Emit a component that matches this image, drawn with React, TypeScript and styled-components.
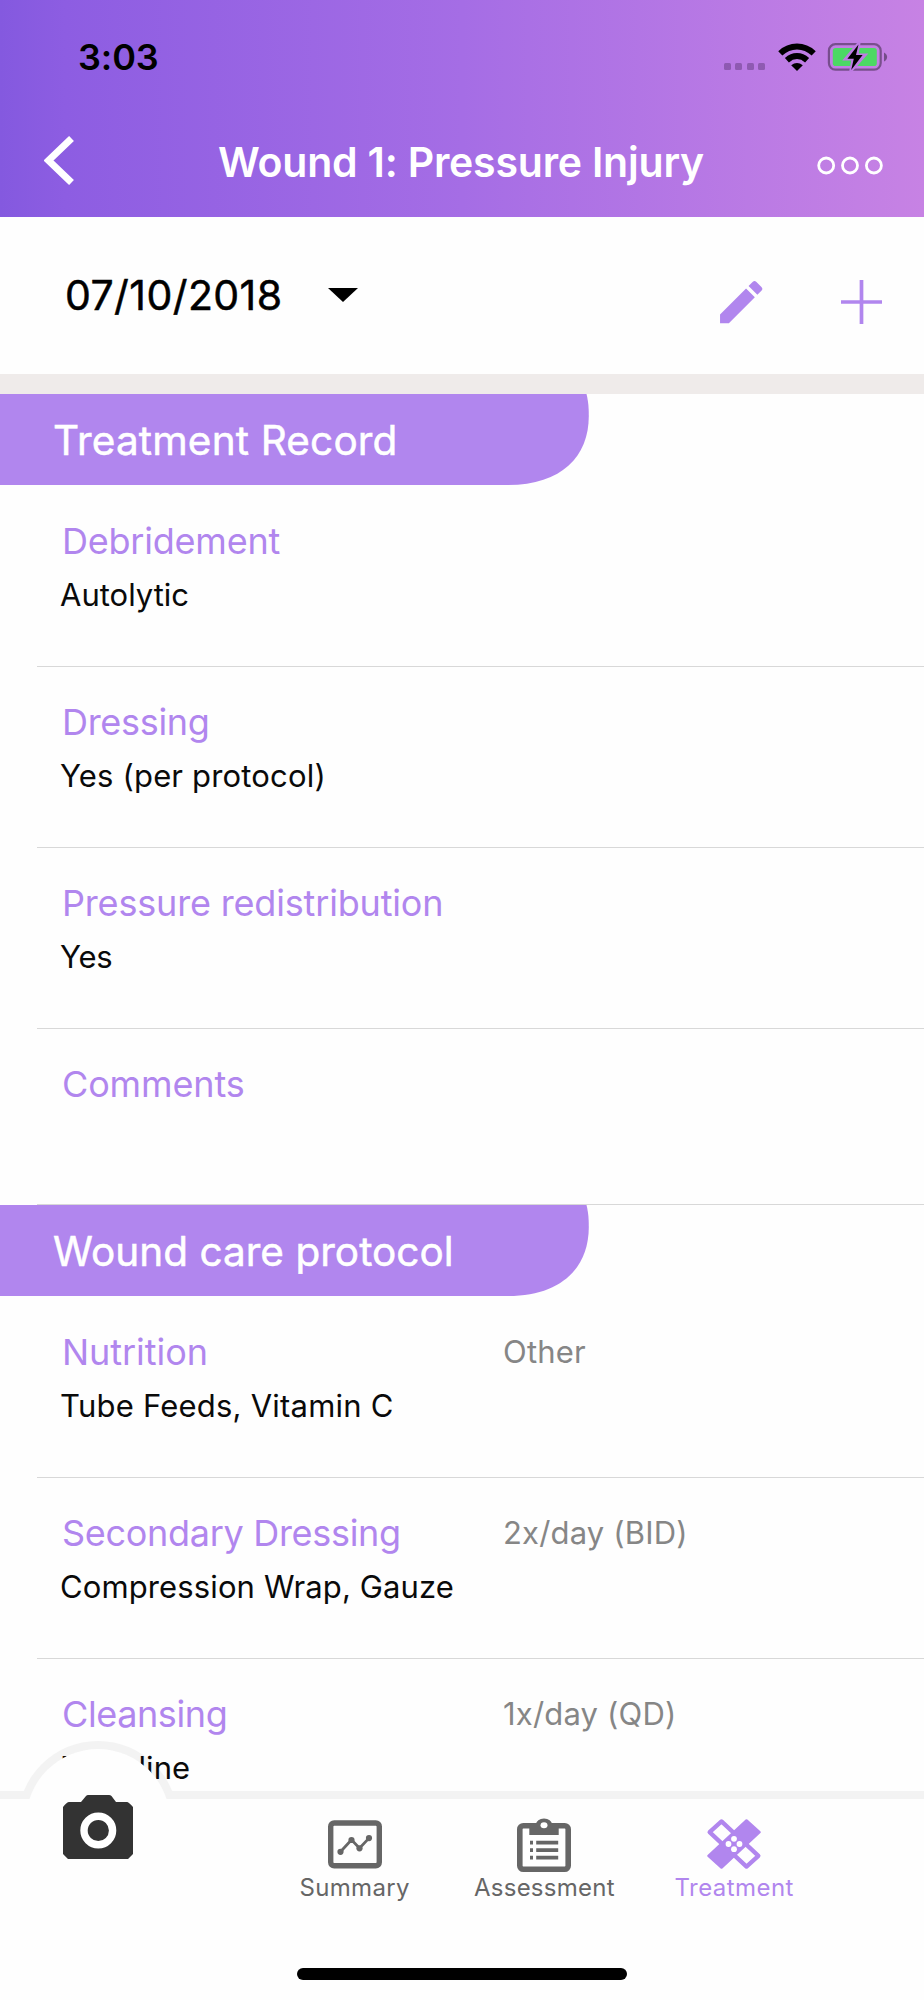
import React from "react";
import styled, { createGlobalStyle } from "styled-components";

const purple = "#b186ee";

const GlobalStyle = createGlobalStyle`
  * { box-sizing: border-box; }
  html, body { margin: 0; padding: 0; background: #fefefe; }
  body { font-family: Inter, "Liberation Sans", sans-serif; }
  button { border: 0; padding: 0; background: none; font: inherit; color: inherit; }
  svg { display: block; flex: none; }
`;

const Screen = styled.div`
  display: flex;
  flex-direction: column;
  width: 924px;
  height: 2000px;
  overflow: hidden;
  background: #fefefe;
`;

const Header = styled.header`
  flex: none;
  height: 217px;
  background: linear-gradient(90deg, #8459df 0%, #8d5de2 7%, #a56de5 50%, #c782e4 100%);
`;

const StatusBar = styled.div`
  display: flex;
  align-items: center;
  justify-content: space-between;
  height: 114px;
  padding: 0 36px 0 78px;
`;

const Clock = styled.span`
  font-size: 36px;
  font-weight: 600;
  line-height: 40px;
  letter-spacing: -0.1px;
  color: #000;
`;

const StatusIcons = styled.div`
  display: flex;
  align-items: center;
  gap: 11px;
`;

const SignalDots = styled.div`
  display: flex;
  gap: 4.4px;
  margin: 18px 2px 0 0;
`;

const SignalDot = styled.i`
  width: 7px;
  height: 7px;
  border-radius: 1.5px;
  background: rgba(60, 30, 80, 0.34);
`;

const NavBar = styled.nav`
  display: grid;
  grid-template-columns: 160px 1fr 162px;
  align-items: center;
  height: 96px;
`;

const BackButton = styled.button`
  padding: 0 0 3px 44px;
  justify-self: start;
`;

const MoreButton = styled.button`
  padding: 7px 40px 0 0;
  justify-self: end;
`;

const Title = styled.h1`
  margin: 0;
  font-size: 41px;
  font-weight: 600;
  line-height: 50px;
  letter-spacing: -0.21px;
  text-align: center;
  white-space: nowrap;
  color: #fff;
`;

const DateBar = styled.div`
  display: flex;
  flex: none;
  align-items: center;
  height: 177px;
  padding: 0 40px 2px 65px;
  border-bottom: 20px solid #efebea;
`;

const DateSelect = styled.button`
  display: flex;
  align-items: center;
  gap: 45.5px;
  font-size: 41px;
  line-height: 50px;
  letter-spacing: 0.42px;
  color: #000;
  -webkit-text-stroke: 0.5px #000;
`;

const DateActions = styled.div`
  display: flex;
  align-items: center;
  gap: 71.5px;
  margin-left: auto;
  padding-top: 15px;
`;

const Content = styled.main`
  flex: none;
  height: 1396px;
  overflow: hidden;
`;

const SectionTitle = styled.h2<{ $spacing: number }>`
  display: flex;
  align-items: center;
  width: 589px;
  height: 91px;
  margin: 0 0 1px;
  padding: 1px 0 0 53px;
  font-size: 40.5px;
  font-weight: 400;
  letter-spacing: ${(p) => p.$spacing}px;
  white-space: nowrap;
  color: #fff;
  -webkit-text-stroke: 0.5px #fff;
  background: ${purple};
  clip-path: path("M0 0H586.5C588.2 7 588.8 13 588.8 22C588.8 62 562 91 508 91H0Z");
`;

const Entry = styled.section<{ $height: number }>`
  display: grid;
  grid-template-columns: 442px 1fr;
  grid-template-rows: 44px 40px;
  row-gap: 12px;
  height: ${(p) => p.$height}px;
  margin-left: 37px;
  padding: 33px 0 0 23px;
  border-bottom: 1px solid #d8d8d8;
`;

const Label = styled.h3<{ $spacing: number }>`
  margin: 0;
  padding-left: 2px;
  font-size: 36px;
  font-weight: 400;
  line-height: 44px;
  letter-spacing: ${(p) => p.$spacing}px;
  white-space: nowrap;
  color: ${purple};
`;

const Value = styled.p<{ $spacing: number }>`
  grid-column: 1;
  grid-row: 2;
  margin: 0;
  font-size: 31px;
  line-height: 40px;
  letter-spacing: ${(p) => p.$spacing}px;
  white-space: nowrap;
  color: #0a0a0a;
`;

const Frequency = styled.span`
  padding-left: 1px;
  font-size: 31px;
  line-height: 44px;
  letter-spacing: 0.18px;
  color: #868686;
`;

const BottomBar = styled.footer`
  position: relative;
  flex: none;
  height: 210px;
  padding-top: 8.7px;
`;

/* Line and ring share one layer so that their overlap stays a single tint. */
const Edge = styled.div`
  position: absolute;
  left: 0;
  top: -49px;
  width: 100%;
  height: 57.7px;
  overflow: hidden;
  opacity: 0.04;

  &::before {
    content: "";
    position: absolute;
    inset: 49.5px 0 0;
    background: #000;
  }

  &::after {
    content: "";
    position: absolute;
    left: 18.3px;
    top: 0;
    width: 160px;
    height: 160px;
    border-radius: 50%;
    background: #000;
  }
`;

const BarSurface = styled.div`
  display: flex;
  flex-direction: column;
  align-items: center;
  justify-content: space-between;
  height: 100%;
  padding: 18px 0 20px;
  background: #fefefe;
`;

const CameraButton = styled.button`
  position: absolute;
  left: 26.3px;
  top: -41px;
  display: flex;
  align-items: center;
  justify-content: center;
  width: 144px;
  height: 144px;
  padding-top: 13px;
  border-radius: 50%;
  background: #fefefe;
`;

const Tabs = styled.div`
  display: flex;
  align-self: stretch;
  padding-left: 259.7px;
`;

const Tab = styled.button<{ $active?: boolean; $spacing: number }>`
  display: flex;
  flex-direction: column;
  align-items: center;
  width: 189.8px;
  font-size: 24px;
  line-height: 29px;
  letter-spacing: ${(p) => p.$spacing}px;
  color: ${(p) => (p.$active ? purple : "#666")};
`;

const HomeIndicator = styled.div`
  width: 330px;
  height: 12px;
  border-radius: 6px;
  background: #000;
`;

const WifiIcon = () => (
  <svg width="38" height="28" viewBox="0 0 38 28">
    <g fill="none" stroke="#000" strokeWidth="6">
      <path d="M2.3 10.4C12 1.3 26 1.3 35.7 10.4" />
      <path d="M8.9 17.2C15 11.7 23 11.7 29.1 17.2" />
    </g>
    <path d="M13.2 22.2Q19 17.6 24.8 22.2L19 28Z" fill="#000" />
  </svg>
);

const BatteryIcon = () => (
  <svg width="61" height="30" viewBox="0 0 61 30">
    <rect x="1.9" y="2.2" width="51.8" height="25.4" rx="6.5" fill="none" stroke="#000" strokeOpacity=".38" strokeWidth="2.2" />
    <path d="M57 10.4c4.2 2 4.2 7.2 0 9.2z" fill="#000" fillOpacity=".4" />
    <rect x="5.8" y="6" width="44" height="18" rx="2.8" fill="#4cd964" />
    <path d="M32 1L18.5 17H26L23.8 29L38 13H30Z" fill="#be7be4" stroke="#be7be4" strokeWidth="3" />
    <path d="M31.5 2.6L20.4 16.8H26.8L24.2 28L35.6 13H29Z" fill="#000" />
  </svg>
);

const BackIcon = () => (
  <svg width="30" height="49" viewBox="0 0 30 49">
    <path d="M27.5 2.5L4.5 24.5L27.5 46.5" fill="none" stroke="#fff" strokeWidth="7" />
  </svg>
);

const MoreIcon = () => (
  <svg width="67" height="19" viewBox="0 0 67 19">
    <g fill="none" stroke="#fff" strokeWidth="2.8">
      <circle cx="9.2" cy="9.5" r="7.5" />
      <circle cx="33" cy="9.5" r="7.5" />
      <circle cx="56.9" cy="9.5" r="7.5" />
    </g>
  </svg>
);

const CaretIcon = () => (
  <svg width="30" height="14" viewBox="0 0 30 14">
    <path d="M0 0H30L15 14Z" fill="#000" />
  </svg>
);

const PencilIcon = () => (
  <svg width="56.4" height="56.4" viewBox="0 0 24 24" fill={purple}>
    <path d="M3 17.25V21h3.75L17.81 9.94l-3.75-3.75L3 17.25zM20.71 7.04a.996.996 0 0 0 0-1.41l-2.34-2.34a.996.996 0 0 0-1.41 0l-1.83 1.83 3.75 3.75 1.83-1.83z" />
  </svg>
);

const PlusIcon = () => (
  <svg width="43" height="44" viewBox="0 0 43 44">
    <path d="M0 22H41M20.5 0V44" stroke={purple} strokeWidth="3.7" />
  </svg>
);

const CameraIcon = () => (
  <svg width="70" height="66" viewBox="0 0 70 66">
    <path d="M25 0H46Q47.5 0 48.5 1L53 7H64Q65.5 7 70 12V59L65 64H5L0 59V12Q4 7 6 7H18L23 1Q24 0 25 0Z" fill="#333" />
    <circle cx="35.3" cy="35.5" r="14.3" fill="none" stroke="#fff" strokeWidth="7.4" />
  </svg>
);

const SummaryIcon = () => (
  <svg width="54" height="56" viewBox="0 0 54 56">
    <rect x="2.7" y="6" width="48.6" height="42.8" rx="3.5" fill="none" stroke="currentColor" strokeWidth="5.4" />
    <path d="M12.5 34.8L23.5 22.8L31.5 31.3L41 21.1" fill="none" stroke="currentColor" strokeWidth="2.8" />
    <g fill="currentColor">
      <circle cx="12.5" cy="34.8" r="3.1" />
      <circle cx="23.5" cy="23" r="3.1" />
      <circle cx="31.5" cy="31.3" r="3.1" />
      <circle cx="41" cy="21.1" r="3.1" />
    </g>
  </svg>
);

const AssessmentIcon = () => (
  <svg width="54" height="56" viewBox="0 0 54 56">
    <rect x="2.8" y="8.8" width="48.4" height="43.5" rx="3.5" fill="none" stroke="currentColor" strokeWidth="5.6" />
    <path d="M12.3 8H18.5Q20 1.5 27 1.5T35.5 8H41.7V18H12.3Z" fill="currentColor" />
    <ellipse cx="27" cy="8.3" rx="3.5" ry="3" fill="#fff" />
    <path d="M13 25.7h3M13 33.2h3M13 40.7h3M19.2 25.7H41.2M19.2 33.2H41.2M19.2 40.7H41.2" stroke="currentColor" strokeWidth="3.8" />
  </svg>
);

const TreatmentIcon = () => (
  <svg width="56" height="56" viewBox="0 0 56 56">
    <path d="M15.5 4.4L52.4 38.9L40.5 49.6L3.6 15.1Z" fill="none" stroke="currentColor" strokeWidth="4.2" strokeLinejoin="round" />
    <path d="M40.5 3.5L53.5 15.1L15.5 50.5L2.5 38.9Z" fill="currentColor" stroke="currentColor" strokeWidth="2.6" strokeLinejoin="round" />
    <g fill="#fff">
      <circle cx="28" cy="21.8" r="2.9" />
      <circle cx="28" cy="32.2" r="2.9" />
      <circle cx="22.5" cy="27" r="2.9" />
      <circle cx="33.5" cy="27" r="2.9" />
    </g>
  </svg>
);

type EntryData = {
  label: string;
  labelSpacing?: number;
  value?: string;
  valueSpacing?: number;
  frequency?: string;
  height?: number;
};

const treatment: EntryData[] = [
  { label: "Debridement", labelSpacing: -0.22, value: "Autolytic", valueSpacing: 0 },
  { label: "Dressing", labelSpacing: -0.3, value: "Yes (per protocol)", valueSpacing: 0.17 },
  { label: "Pressure redistribution", labelSpacing: -0.17, value: "Yes", valueSpacing: -0.2 },
  { label: "Comments", height: 176 },
];

const protocol: EntryData[] = [
  { label: "Nutrition", labelSpacing: -0.05, value: "Tube Feeds, Vitamin C", valueSpacing: 0.22, frequency: "Other" },
  { label: "Secondary Dressing", labelSpacing: -0.3, value: "Compression Wrap, Gauze", valueSpacing: 0.12, frequency: "2x/day (BID)" },
  { label: "Cleansing", labelSpacing: -0.4, value: "N. Saline", valueSpacing: 0.05, frequency: "1x/day (QD)" },
];

const EntryList = ({ entries }: { entries: EntryData[] }) => (
  <>
    {entries.map((e) => (
      <Entry key={e.label} $height={e.height ?? 181}>
        <Label $spacing={e.labelSpacing ?? -0.13}>{e.label}</Label>
        {e.frequency && <Frequency>{e.frequency}</Frequency>}
        {e.value && <Value $spacing={e.valueSpacing ?? 0}>{e.value}</Value>}
      </Entry>
    ))}
  </>
);

export default function App() {
  return (
    <>
      <GlobalStyle />
      <Screen>
        <Header>
          <StatusBar>
            <Clock>3:03</Clock>
            <StatusIcons>
              <SignalDots>
                <SignalDot />
                <SignalDot />
                <SignalDot />
                <SignalDot />
              </SignalDots>
              <WifiIcon />
              <BatteryIcon />
            </StatusIcons>
          </StatusBar>
          <NavBar>
            <BackButton aria-label="Back">
              <BackIcon />
            </BackButton>
            <Title>Wound 1: Pressure Injury</Title>
            <MoreButton aria-label="More">
              <MoreIcon />
            </MoreButton>
          </NavBar>
        </Header>

        <DateBar>
          <DateSelect>
            07/10/2018
            <CaretIcon />
          </DateSelect>
          <DateActions>
            <PencilIcon />
            <PlusIcon />
          </DateActions>
        </DateBar>

        <Content>
          <SectionTitle $spacing={0.16}>Treatment Record</SectionTitle>
          <EntryList entries={treatment} />
          <SectionTitle $spacing={0.03}>Wound care protocol</SectionTitle>
          <EntryList entries={protocol} />
        </Content>

        <BottomBar>
          <Edge />
          <BarSurface>
            <Tabs>
              <Tab $spacing={0.33}>
                <SummaryIcon />
                Summary
              </Tab>
              <Tab $spacing={0.25}>
                <AssessmentIcon />
                Assessment
              </Tab>
              <Tab $active $spacing={0.45}>
                <TreatmentIcon />
                Treatment
              </Tab>
            </Tabs>
            <HomeIndicator />
          </BarSurface>
          <CameraButton aria-label="Camera">
            <CameraIcon />
          </CameraButton>
        </BottomBar>
      </Screen>
    </>
  );
}
